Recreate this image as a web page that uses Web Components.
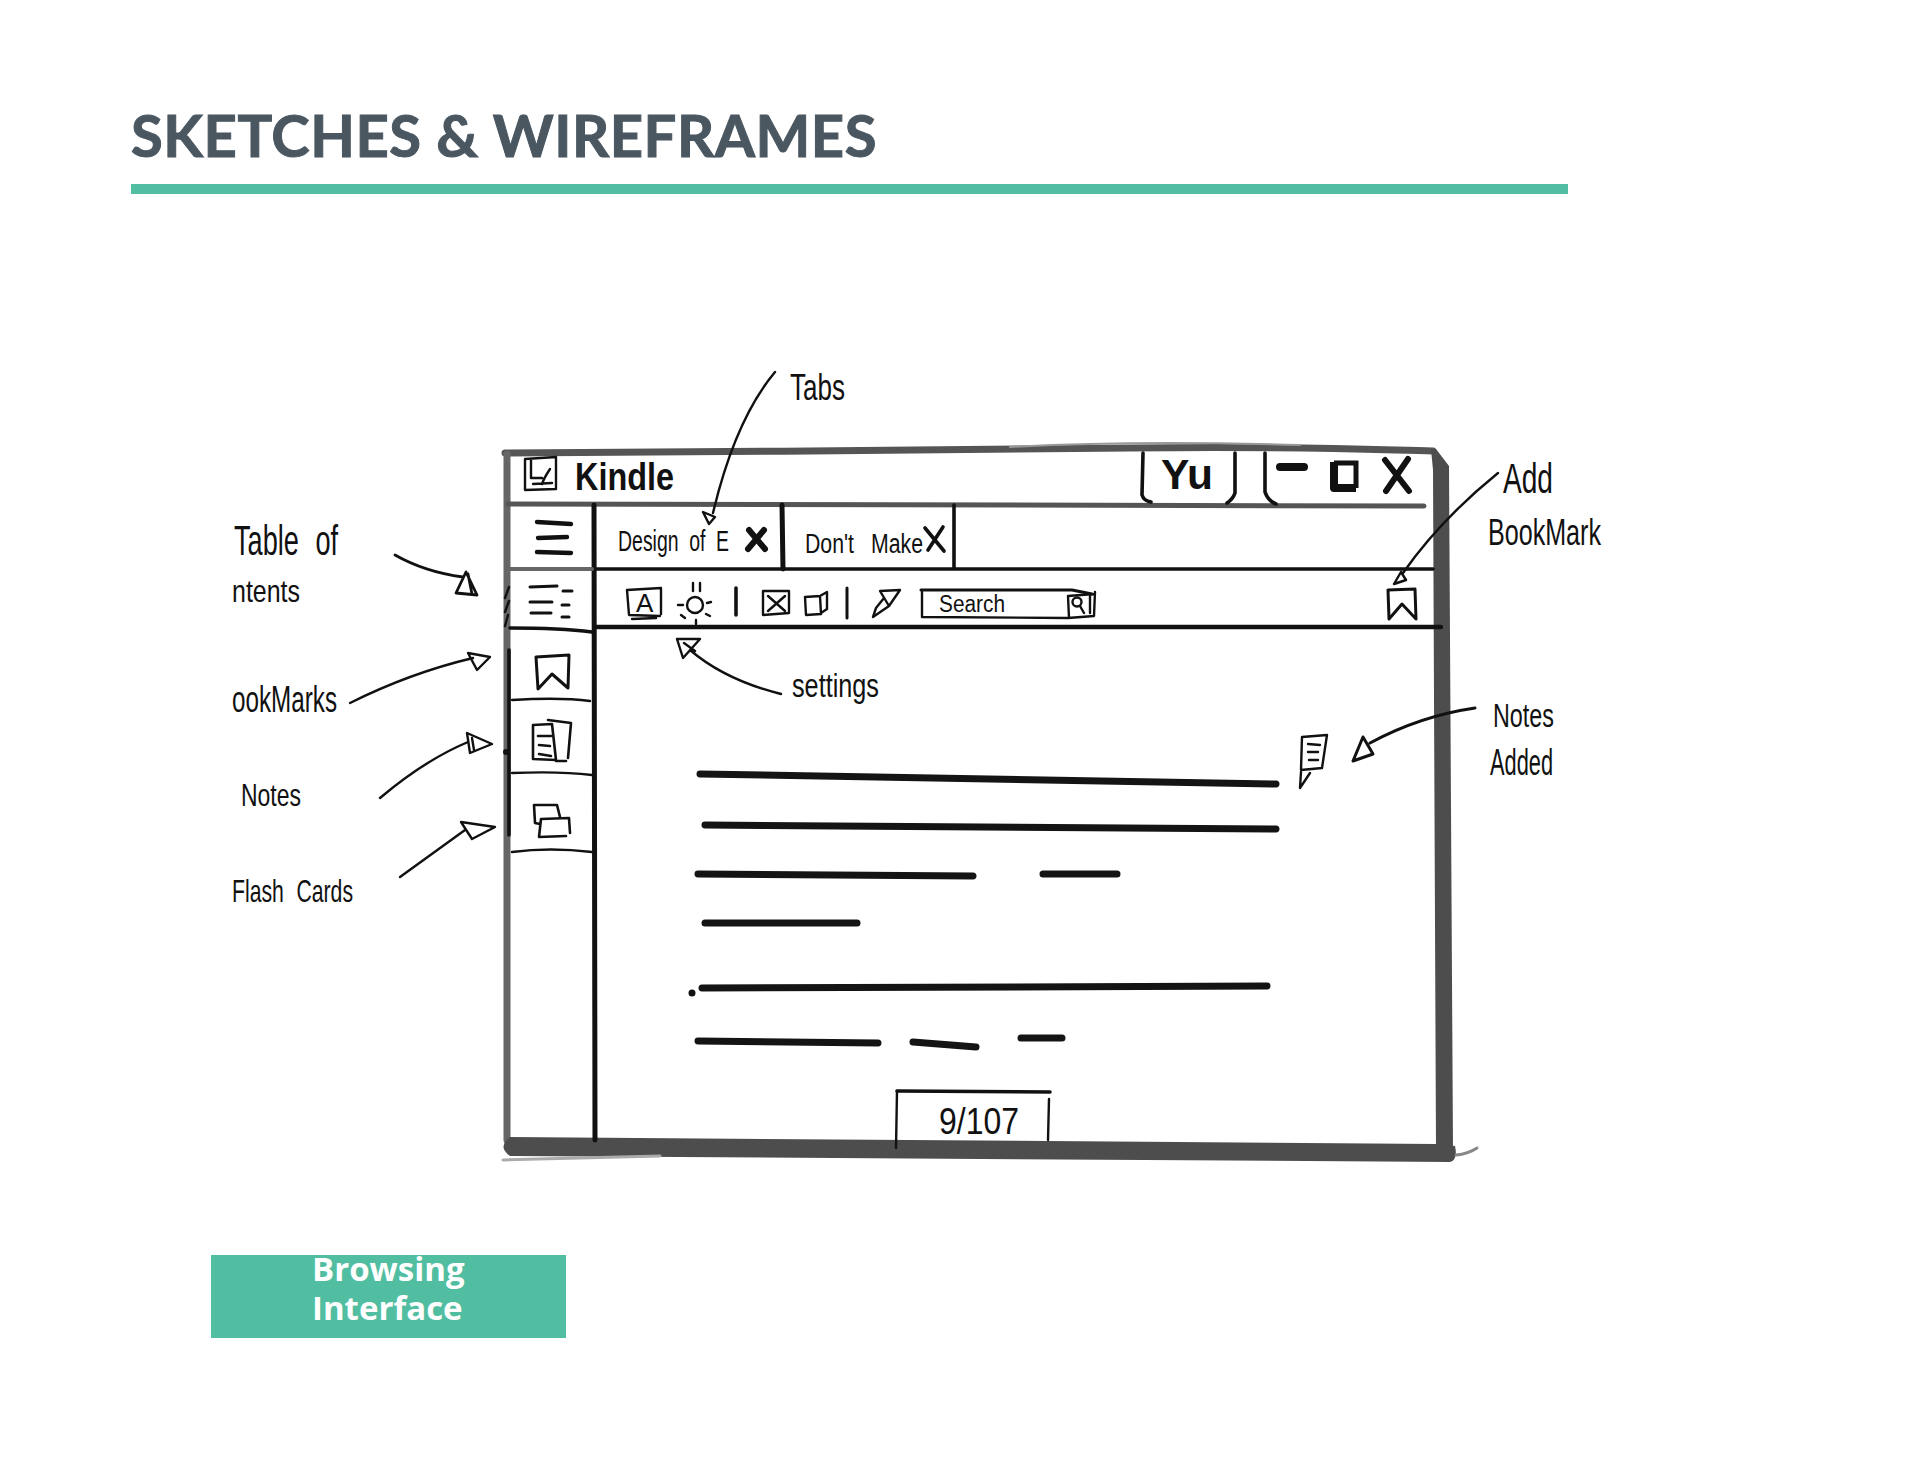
<!DOCTYPE html>
<html lang="en">
<head>
<meta charset="utf-8">
<title>Sketches &amp; Wireframes</title>
<style>
  html, body { margin: 0; background: #fff; }
</style>
</head>
<body>

<template id="slide-page-tpl">
  <style>
    :host { display: flex; flex-direction: column; width: 1920px; height: 1484px; padding-top: 100px; box-sizing: border-box; background: #fff; }
  </style>
  <slot></slot>
</template>

<template id="slide-heading-tpl">
  <style>
    :host { display: block; margin-left: 131px; width: 1437px; }
    h1 { margin: 0; font: 700 58px/70px Lato, "Open Sans", sans-serif; letter-spacing: .5px; -webkit-text-stroke: 1px #4a5761; color: #4a5761; white-space: nowrap; }
    .rule { height: 10px; margin-top: 14px; background: #52bea1; }
  </style>
  <h1><slot></slot></h1>
  <div class="rule"></div>
</template>

<template id="wireframe-sketch-tpl">
  <style>
    :host { display: block; width: 1692px; height: 810px; margin: 166px 0 85px 228px; }
    svg { display: block; }
    text { font-family: "Liberation Sans", sans-serif; fill: #111; stroke: none; }
    .hand { font-weight: 400; }
    .bold { font-weight: 700; }
    .s { fill: none; stroke: #111; stroke-width: 2.4; stroke-linecap: round; stroke-linejoin: round; }
    .m { fill: none; stroke: #111; stroke-width: 3.6; stroke-linecap: round; stroke-linejoin: round; }
    .l { fill: none; stroke: #141414; stroke-width: 7; stroke-linecap: round; }
    .g { fill: none; stroke: #555; stroke-linecap: round; }
  </style>
  <svg width="1692" height="810" viewBox="228 360 1692 810" xmlns="http://www.w3.org/2000/svg">
    <!-- window frame -->
    <path class="g" stroke-width="7" d="M505 453 C700 452 950 450 1130 448 S1380 450 1433 451"/>
    <path class="g" stroke-width="2" style="stroke:#999" d="M1010 447 C1100 442 1200 442 1300 445"/>
    <path class="g" stroke-width="7" style="stroke:#666" d="M507 454 L507 1140"/>
    <path fill="#4d4d4d" d="M1431 449 L1436 449 L1449 466 L1453 1150 L1436 1150 L1433 470Z"/>
    <path fill="#4d4d4d" d="M510 1137 L1437 1144 L1455 1146 Q1458 1160 1450 1162 L510 1156 Q497 1147 510 1137Z"/>
    <path class="g" stroke-width="3" style="stroke:#aaa" d="M503 1160 Q570 1158 660 1156"/>
    <path class="g" stroke-width="3" style="stroke:#888" d="M1456 1155 Q1468 1154 1477 1148"/>
    <path class="g" stroke-width="5" d="M508 504 L1424 506"/>

    <!-- sidebar -->
    <path class="m" style="stroke-width:5" d="M594 505 L595 1140"/>
    <path class="g" stroke-width="4" style="stroke:#666" d="M510 569 L592 569"/>
    <path class="m" d="M510 628 Q560 628 592 632"/>
    <path class="m" d="M509 650 L509 835"/>
    <path class="s" d="M512 700 Q560 697 590 701 M512 773 Q560 771 592 775 M512 852 Q550 847 592 852"/>
    <path class="s" d="M509 587 L505 598 M509 601 L505 612 M508 615 L505 626"/>
    <circle cx="506" cy="752" r="3" fill="#111"/>

    <!-- hamburger -->
    <path class="m" style="stroke-width:4.4" d="M537 522 L571 524 M538 538 L567 537 M537 552 L571 553"/>
    <!-- toc -->
    <path class="s" style="stroke-width:3" d="M530 587 L557 586 M530 602 L552 602 M531 613 L551 613 M563 591 L572 591 M562 605 L569 605 M562 617 L569 617"/>
    <!-- bookmark -->
    <path class="s" style="stroke-width:3" d="M536 657 L538 689 L552 674 L568 688 L569 655 L536 657"/>
    <!-- notes -->
    <path class="s" style="stroke-width:2.6" d="M533 725 L552 724 L556 760 L533 759Z M548 720 L571 723 L568 758 M556 761 L566 761 M538 736 L551 736 M539 745 L550 746 M539 754 L551 756"/>
    <!-- cards -->
    <path class="s" style="stroke-width:2.6" d="M534 805 L557 805 L560 817 M534 805 L535 823 L540 824 M541 819 L569 818 L570 833 M541 819 L539 837 L566 836"/>

    <!-- title bar -->
    <path class="s" d="M525 459 L556 457 L556 489 L525 490Z M531 459 L531 478 L542 478 M533 484 L552 483 M550 469 Q544 478 542 484"/>
    <text class="bold" x="575" y="490" font-size="38" textLength="99" lengthAdjust="spacingAndGlyphs">Kindle</text>
    <path class="m" d="M1143 453 L1142 495 Q1144 501 1151 502 M1235 453 L1235 493 Q1233 499 1227 503 M1265 453 L1265 492 Q1268 501 1276 504"/>
    <text class="bold" x="1161" y="489" font-size="42" textLength="52" lengthAdjust="spacingAndGlyphs">Yu</text>
    <path fill="none" stroke="#111" stroke-width="8" stroke-linecap="round" d="M1280 467 L1304 467"/>
    <path fill="none" stroke="#111" stroke-width="5" d="M1334 463 L1356 463 L1356 488"/>
    <path fill="none" stroke="#111" stroke-width="8" stroke-linejoin="round" d="M1334 462 L1334 488 L1356 488"/>
    <path fill="none" stroke="#111" stroke-width="6" stroke-linecap="round" d="M1385 460 L1409 491 M1408 459 L1386 491"/>

    <!-- tabs -->
    <text class="hand" x="618" y="551" font-size="30" word-spacing="8" textLength="111" lengthAdjust="spacingAndGlyphs">Design of E</text>
    <path fill="none" stroke="#111" stroke-width="6" stroke-linecap="round" d="M749 530 L765 549 M764 530 L748 549"/>
    <path fill="none" stroke="#111" stroke-width="5" stroke-linecap="round" d="M782 505 L783 569"/>
    <text class="hand" x="805" y="553" font-size="27" word-spacing="14" textLength="118" lengthAdjust="spacingAndGlyphs">Don't Make</text>
    <path fill="none" stroke="#111" stroke-width="3.6" stroke-linecap="round" d="M925 528 L944 551 M943 527 L928 550"/>
    <path class="m" d="M954 505 L954 568"/>
    <path class="m" d="M596 569 L1433 569"/>
    <path class="m" style="stroke-width:4.4" d="M596 627 L1441 627"/>

    <!-- toolbar -->
    <path class="s" d="M627 590 L661 588 L661 614 M627 590 L629 615 L660 616 M632 619 L656 618"/>
    <text class="hand" x="636" y="612" font-size="26">A</text>
    <circle cx="695" cy="605" r="8" class="s"/>
    <path class="s" d="M693 583 L693 591 M700 583 L700 591 M678 605 L683 605 M707 603 L711 602 M681 615 L685 618 M706 614 L710 616 M696 620 L696 624"/>
    <path class="m" d="M736 588 L736 615"/>
    <path class="s" d="M763 591 L789 591 L789 613 L763 615Z M768 596 L785 611 M785 596 L768 611"/>
    <path class="s" d="M805 597 L820 596 L821 614 L806 615Z M820 596 L827 592 L827 609 L821 613"/>
    <path class="m" style="stroke-width:3" d="M847 588 L847 618"/>
    <path class="s" d="M880 591 L900 590 L889 606 Z M884 598 L876 608 L873 617 L889 606"/>
    <path class="m" style="stroke-width:3" d="M921 590 L1072 590 L1092 594"/>
    <path class="s" d="M922 592 L922 617 L1068 618 L1094 616 L1095 592 M1068 596 L1069 618 M1068 596 L1094 594"/>
    <text class="hand" x="939" y="612" font-size="23" textLength="66" lengthAdjust="spacingAndGlyphs">Search</text>
    <circle cx="1077" cy="602" r="4.5" class="s"/>
    <path class="s" d="M1080 606 L1084 613 M1090 596 L1090 613"/>
    <path class="s" style="stroke-width:3" d="M1388 590 L1415 589 L1416 619 L1402 604 L1389 619Z"/>

    <!-- reading text -->
    <path class="l" d="M700 774 L1276 784"/>
    <path class="l" d="M705 825 L1276 829"/>
    <path class="l" d="M698 874 L973 876 M1043 874 L1117 874"/>
    <path class="l" d="M705 923 L857 923"/>
    <circle cx="692" cy="993" r="3.5" fill="#111"/>
    <path class="l" d="M702 988 L1267 986"/>
    <path class="l" d="M698 1041 L878 1043 M913 1042 L976 1047 M1021 1038 L1062 1038"/>

    <!-- inline note -->
    <path class="s" d="M1302 737 L1327 735 L1322 768 L1301 770Z M1308 744 L1320 745 M1308 752 L1318 752 M1309 760 L1318 760 M1301 772 L1300 788 L1310 773"/>

    <!-- page counter -->
    <path class="m" d="M897 1091 L1050 1092"/>
    <path class="s" d="M897 1091 L896 1148 M1049 1099 L1048 1140"/>
    <text class="hand" x="939" y="1134" font-size="36" textLength="80" lengthAdjust="spacingAndGlyphs">9/107</text>

    <!-- annotations -->
    <text class="hand" x="790" y="400" font-size="36" textLength="55" lengthAdjust="spacingAndGlyphs">Tabs</text>
    <path class="s" d="M775 372 Q735 420 713 513 M703 512 L715 517 L709 524Z"/>

    <text class="hand" x="234" y="555" font-size="42" word-spacing="14" textLength="104" lengthAdjust="spacingAndGlyphs">Table of</text>
    <text class="hand" x="232" y="602" font-size="32" textLength="68" lengthAdjust="spacingAndGlyphs">ntents</text>
    <path class="s" style="stroke-width:2.8" d="M395 555 Q425 572 463 577 M466 572 L456 593 L477 595Z M468 574 L472 594"/>

    <text class="hand" x="232" y="712" font-size="36" textLength="105" lengthAdjust="spacingAndGlyphs">ookMarks</text>
    <path class="s" d="M350 703 Q410 673 473 658 M468 653 L490 657 L477 670Z"/>

    <text class="hand" x="241" y="806" font-size="32" textLength="60" lengthAdjust="spacingAndGlyphs">Notes</text>
    <path class="s" d="M380 798 Q425 760 468 742 M467 733 L492 744 L470 753Z M472 738 L474 750"/>

    <text class="hand" x="232" y="902" font-size="32" word-spacing="10" textLength="121" lengthAdjust="spacingAndGlyphs">Flash Cards</text>
    <path class="s" d="M400 877 L465 830 M461 822 L495 827 L472 839Z"/>

    <text class="hand" x="792" y="697" font-size="33" textLength="87" lengthAdjust="spacingAndGlyphs">settings</text>
    <path class="s" d="M781 694 Q725 680 690 650 M677 639 L700 639 L683 658Z M684 643 L695 651"/>

    <text class="hand" x="1503" y="493" font-size="42" textLength="50" lengthAdjust="spacingAndGlyphs">Add</text>
    <text class="hand" x="1488" y="545" font-size="37" textLength="113" lengthAdjust="spacingAndGlyphs">BookMark</text>
    <path class="s" d="M1498 473 Q1440 520 1403 573 M1401 572 L1394 584 L1406 580Z"/>

    <text class="hand" x="1493" y="727" font-size="33" textLength="61" lengthAdjust="spacingAndGlyphs">Notes</text>
    <text class="hand" x="1490" y="775" font-size="37" textLength="63" lengthAdjust="spacingAndGlyphs">Added</text>
    <path class="s" style="stroke-width:3" d="M1475 708 Q1420 716 1370 743 M1363 737 L1373 754 L1353 761Z"/>
  </svg>
</template>

<template id="slide-caption-tpl">
  <style>
    :host { display: block; width: 355px; height: 83px; margin-left: 211px; background: #52bea1; color: #fff; }
    div { width: 200px; margin: 0 0 0 101px; position: relative; top: -6px; font: 700 33px/39px "Open Sans", sans-serif; }
  </style>
  <div><slot></slot></div>
</template>

<slide-page>
  <slide-heading>SKETCHES &amp; WIREFRAMES</slide-heading>
  <wireframe-sketch></wireframe-sketch>
  <slide-caption>Browsing Interface</slide-caption>
</slide-page>

<script>
  // every element just clones its own template
  function define(name) {
    customElements.define(name, class extends HTMLElement {
      constructor() {
        super();
        var tpl = document.getElementById(name + "-tpl");
        this.attachShadow({ mode: "open" }).appendChild(tpl.content.cloneNode(true));
      }
    });
  }
  ["slide-page", "slide-heading", "wireframe-sketch", "slide-caption"].forEach(define);
</script>
</body>
</html>
